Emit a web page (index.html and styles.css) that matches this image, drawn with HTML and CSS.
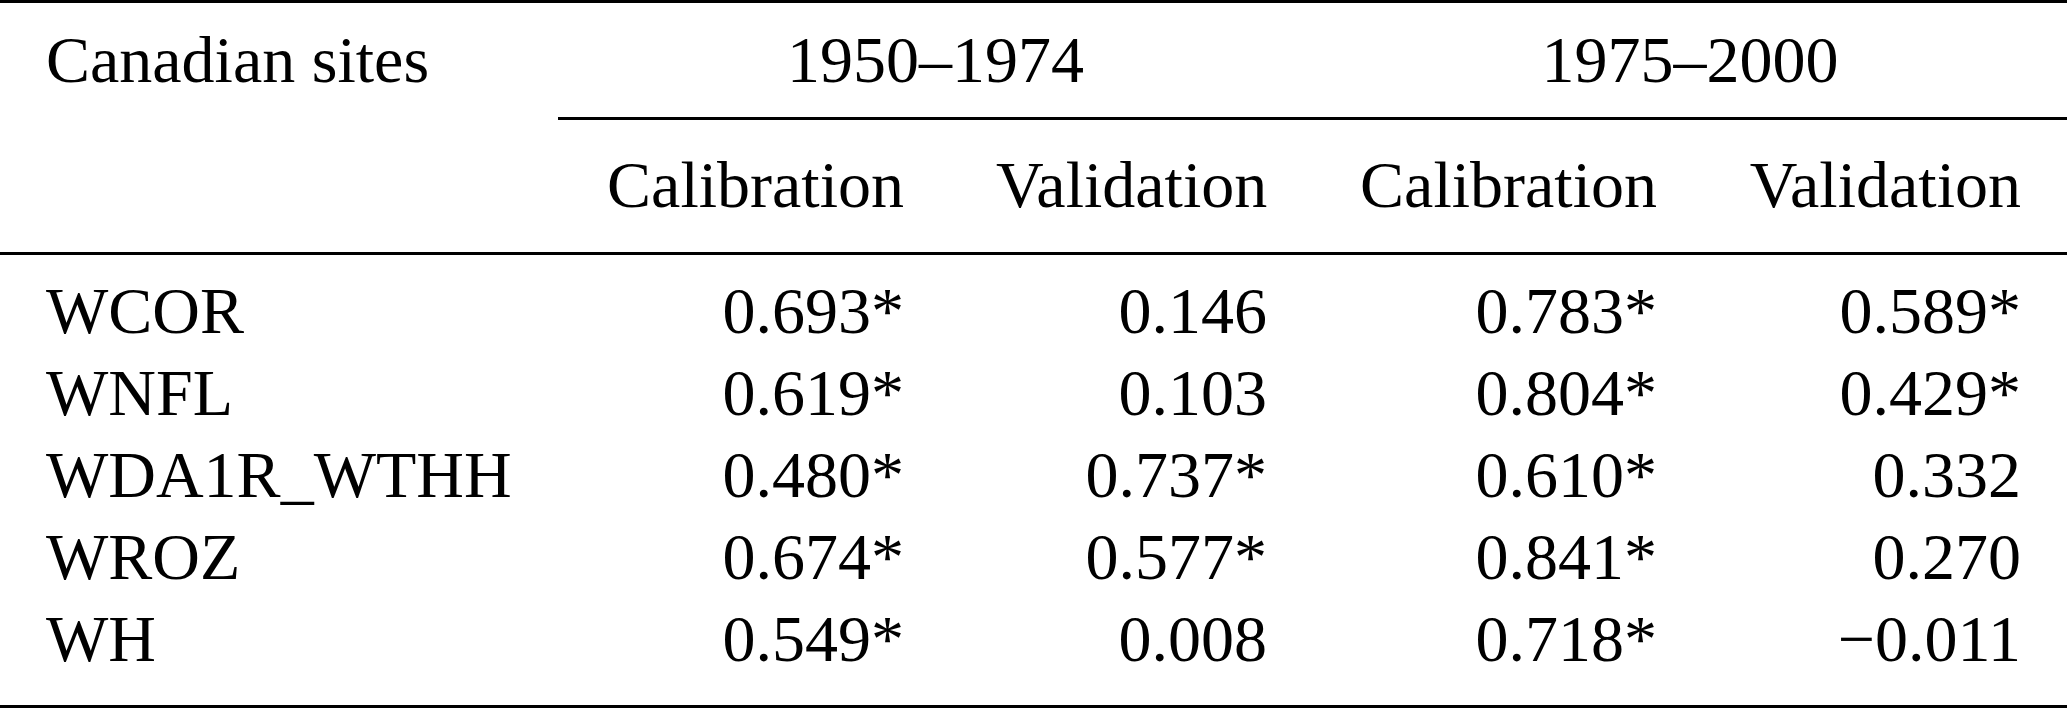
FILE: index.html
```html
<!DOCTYPE html>
<html lang="en">
<head>
<meta charset="utf-8">
<title>Canadian sites correlation table</title>
<link rel="stylesheet" href="styles.css">
</head>
<body>
<table class="results">
  <colgroup>
    <col class="col-site">
    <col class="col-cal1">
    <col class="col-val1">
    <col class="col-cal2">
    <col class="col-val2">
  </colgroup>
  <thead>
    <tr class="head-top">
      <th class="site">Canadian sites</th>
      <th class="period" colspan="2">1950–1974</th>
      <th class="period" colspan="2">1975–2000</th>
    </tr>
    <tr class="head-sub">
      <th class="site"></th>
      <th class="num">Calibration</th>
      <th class="num">Validation</th>
      <th class="num">Calibration</th>
      <th class="num">Validation</th>
    </tr>
  </thead>
  <tbody>
    <tr class="first">
      <td class="site">WCOR</td>
      <td class="num">0.693*</td>
      <td class="num">0.146</td>
      <td class="num">0.783*</td>
      <td class="num">0.589*</td>
    </tr>
    <tr>
      <td class="site">WNFL</td>
      <td class="num">0.619*</td>
      <td class="num">0.103</td>
      <td class="num">0.804*</td>
      <td class="num">0.429*</td>
    </tr>
    <tr>
      <td class="site">WDA1R_WTHH</td>
      <td class="num">0.480*</td>
      <td class="num">0.737*</td>
      <td class="num">0.610*</td>
      <td class="num">0.332</td>
    </tr>
    <tr>
      <td class="site">WROZ</td>
      <td class="num">0.674*</td>
      <td class="num">0.577*</td>
      <td class="num">0.841*</td>
      <td class="num">0.270</td>
    </tr>
    <tr class="last">
      <td class="site">WH</td>
      <td class="num">0.549*</td>
      <td class="num">0.008</td>
      <td class="num">0.718*</td>
      <td class="num">−0.011</td>
    </tr>
  </tbody>
</table>
</body>
</html>
```

FILE: styles.css
```css
html, body {
  margin: 0;
  padding: 0;
  background: #ffffff;
}

.results {
  width: 2067px;
  table-layout: fixed;
  border-collapse: separate;
  border-spacing: 0;
  border-top: 3px solid #000;
  border-bottom: 3px solid #000;
  font-family: "Liberation Serif", "Times New Roman", serif;
  font-size: 66px;
  line-height: 82px;
  color: #000;
}

.col-site { width: 558px; }
.col-cal1 { width: 392px; }
.col-val1 { width: 363px; }
.col-cal2 { width: 390px; }
.col-val2 { width: 364px; }

.results th,
.results td {
  padding: 0 46px;
  font-weight: normal;
  vertical-align: top;
  white-space: nowrap;
}

.results .site { text-align: left; }
.results .num { text-align: right; }
.results .period { text-align: center; }

/* header row 1 */
.head-top th {
  padding-top: 16px;
  padding-bottom: 16px;
}
.head-top .period {
  border-bottom: 3px solid #000;
}
.head-top .site {
  padding-bottom: 19px;
}

/* header row 2 */
.head-sub th {
  padding-top: 24px;
  padding-bottom: 26px;
  border-bottom: 3px solid #000;
}

/* body rows */
.results tbody tr.first td { padding-top: 15px; }
.results tbody tr.last td { padding-bottom: 25px; }
```
